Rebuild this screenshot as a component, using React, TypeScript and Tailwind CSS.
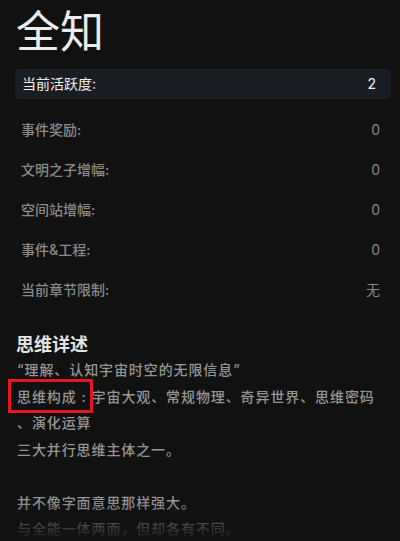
import React from 'react'

const font = { fontFamily: '"Inter", "Noto Sans CJK SC", sans-serif' }

const stats = [
  { label: '事件奖励:', value: '0' },
  { label: '文明之子增幅:', value: '0' },
  { label: '空间站增幅:', value: '0' },
  { label: '事件&工程:', value: '0' },
  { label: '当前章节限制:', value: '无' },
]

export default function App() {
  return (
    <div className="relative h-[541px] overflow-hidden bg-[#111111] pl-[15px] pr-[9px] pt-[7px]" style={font}>
      <h1 className="pl-[1px] text-[44px] leading-[50px] font-normal text-[#ececec]">全知</h1>

      <div className="mt-[12px] flex h-[30px] items-center justify-between rounded-[4px] bg-[#1a1d23] pl-[7px] pr-[15px] text-sm text-[#f2f2f2]">
        <span>当前活跃度:</span>
        <span>2</span>
      </div>

      <div className="mt-[11px] flex flex-col">
        {stats.map(s => (
          <div key={s.label} className="flex h-10 items-center justify-between pl-[6px] pr-[11px] text-sm font-medium text-[#8a8a8a]">
            <span>{s.label}</span>
            <span className="font-normal">{s.value}</span>
          </div>
        ))}
      </div>

      <h2 className="mt-[23px] pl-[1px] text-[18px] leading-6 font-bold text-[#e3e3e3]">思维详述</h2>

      <div className="pl-[2px] text-sm leading-[26.5px] font-medium tracking-[0.9px] text-[#969696]">
        <p>“理解、认知宇宙时空的无限信息”</p>
        <p className="whitespace-nowrap">
          <span className="relative">
            思维构成<span className="inline-block w-[15px] text-center">:</span>
            <span className="absolute -left-[9px] -right-[1px] -top-[9px] -bottom-[8px] border-[3px] border-[#e5161d]" />
          </span>
          宇宙大观、常规物理、奇异世界、思维密码
        </p>
        <p>、演化运算</p>
        <p>三大并行思维主体之一。</p>
        <p>&nbsp;</p>
        <p>并不像字面意思那样强大。</p>
        <p>与全能一体两面，但却各有不同。</p>
      </div>

      <div className="pointer-events-none absolute inset-x-0 bottom-0 h-[40px] bg-gradient-to-b from-[#111111]/0 to-[#111111]" />
    </div>
  )
}
